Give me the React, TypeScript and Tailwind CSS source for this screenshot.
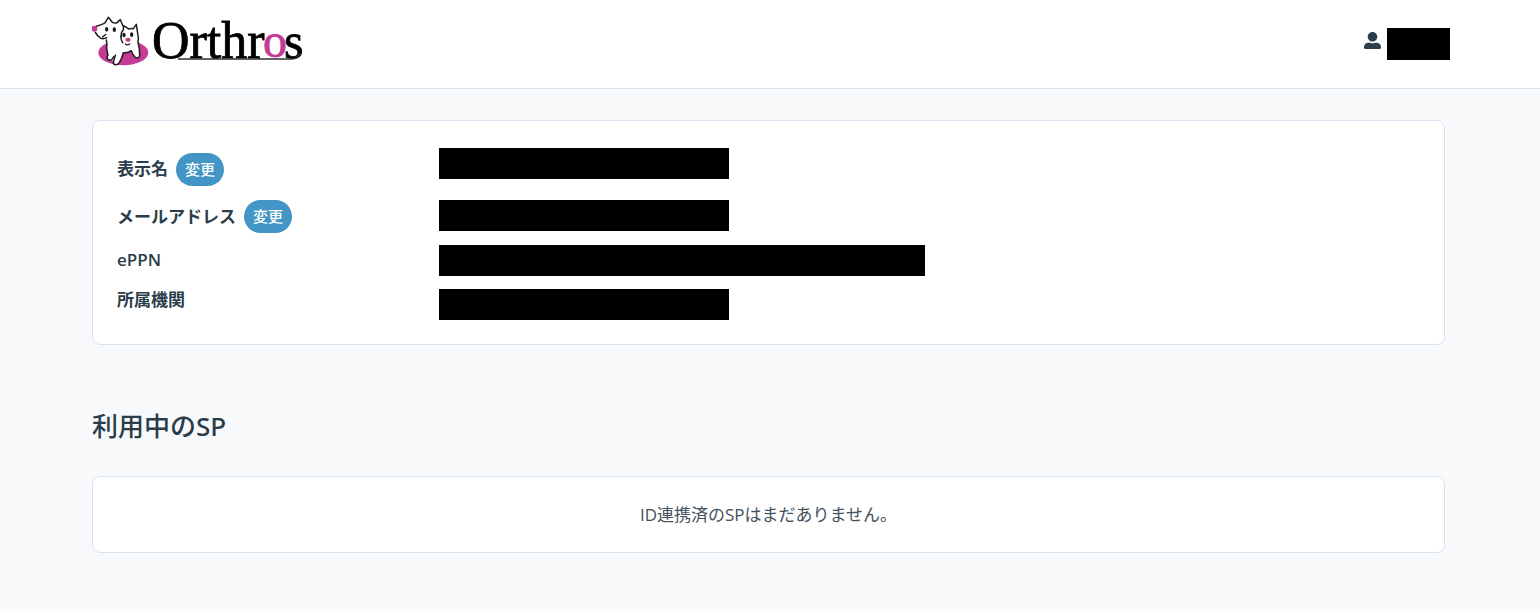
import { FaUserAlt } from "react-icons/fa"

const rows = [
  { label: "表示名", editable: true, height: "h-12", bar: "w-[290px] -mt-3" },
  { label: "メールアドレス", editable: true, height: "h-[47px]", bar: "w-[290px] -mt-0.5" },
  { label: "ePPN", editable: false, height: "h-10", bar: "w-[486px]" },
  { label: "所属機関", editable: false, height: "h-10", bar: "w-[290px] mt-2" },
]

function Logo() {
  return (
    <svg viewBox="0 -4 218 62" className="h-[62px] w-[218px]" role="img" aria-label="Orthros">
      <g transform="scale(0.3333) translate(-21 -12)" strokeLinejoin="round" strokeLinecap="round">
        <ellipse cx="115" cy="128" rx="75" ry="38" fill="#c43b96" />
        {/* both bodies share one white silhouette */}
        <path
          d="M29 56 L34 49 L56 41 L70 22 L82 37 L96 38 L106 30 L114 50 L118 47 L132 57 L145 55 L154 43 L158 70 L160 98 L165 134 Q164 147 152 143 Q143 138 139 122 Q128 130 115 128 L104 156 Q98 167 87 163 Q83 158 86 150 Q76 156 68 148 Q65 142 69 134 L65 110 L64 90 Q42 88 31 68 Z"
          fill="#fff"
        />
        <g fill="none" stroke="#1c1c1c" strokeWidth="4.5">
          <path d="M34 49 Q44 46 56 41 Q62 38 64 32 L70 22 L82 37 Q89 40 96 38 L106 29 L114 48" />
          <path d="M31 67 Q36 78 48 85 Q56 88 65 83 M53 81 Q58 76 62 74" />
          <path d="M64 90 Q67 103 65 114 Q66 126 69 134 Q64 142 68 148 Q75 153 81 148 L86 140" />
          <path d="M108 80 Q108 66 115 59 L116 47 L131 57 Q139 54 145 56 L154 43 L158 70 Q162 84 159 98 Q165 116 164 138 Q160 147 151 142 Q143 136 139 122 Q128 130 115 128 Q111 145 104 156 Q98 167 87 163 Q83 158 87 150 L91 136" />
          <path d="M108 80 Q108 91 113 98" />
        </g>
        <g fill="#1c1c1c">
          <ellipse cx="65" cy="58" rx="5" ry="7" />
          <ellipse cx="88" cy="59" rx="5" ry="7" />
          <ellipse cx="117" cy="75" rx="5" ry="7" />
          <ellipse cx="140" cy="74" rx="5" ry="7" />
        </g>
        <circle cx="28" cy="56" r="9" fill="#c43b96" />
        <ellipse cx="129" cy="89" rx="8" ry="6" fill="#c43b96" />
        <path d="M121 102 Q127 107 134 102" fill="none" stroke="#1c1c1c" strokeWidth="4" />
      </g>
      <g fontFamily="'Liberation Serif', serif" strokeWidth="0.8">
        <text x="60" y="44" fontSize="52" stroke="#000">
          Orthr
        </text>
        <text x="171" y="43" fontSize="48" fill="#c43b96" stroke="#c43b96">
          o
        </text>
        <text x="192" y="44" fontSize="50" stroke="#000">
          s
        </text>
      </g>
      <path d="M86 45 H200 Q206 45 208 39" fill="none" stroke="#333" strokeWidth="1.5" />
    </svg>
  )
}

export default function App() {
  return (
    <div className="min-h-screen bg-[#f8f9fb] font-['Open_Sans','Noto_Sans_CJK_JP',sans-serif] text-[17px] text-[#2b3d4b]">
      <header className="border-b border-[#d8e5ee] bg-white">
        <div className="flex h-[88px] items-center justify-between pr-[90px] pb-1.5 pl-[92px]">
          <a href="#">
            <Logo />
          </a>
          <button type="button" aria-label="ユーザーメニュー" className="flex items-center gap-1.5">
            <FaUserAlt className="mb-0.5 size-[17px]" />
            <span className="mt-1.5 h-8 w-[63px] bg-black" />
          </button>
        </div>
      </header>

      <main className="pt-[31px] pr-[95px] pl-[92px]">
        <dl className="rounded-lg border border-[#d8e3ef] bg-white p-6">
          {rows.map((row) => (
            <div key={row.label} className={`flex items-center ${row.height}`}>
              <dt className="flex w-[322px] shrink-0 items-center gap-2 font-semibold">
                {row.label}
                {row.editable && (
                  <button
                    type="button"
                    className="h-[33px] w-12 rounded-full bg-[#4295c4] text-[15px] font-medium text-white"
                  >
                    変更
                  </button>
                )}
              </dt>
              <dd className={`h-[31px] bg-black ${row.bar}`} />
            </div>
          ))}
        </dl>

        <h2 className="mt-[60px] font-['Noto_Sans','Noto_Sans_CJK_JP',sans-serif] text-[26px] leading-[42px] font-medium">
          利用中のSP
        </h2>
        <p className="mt-[29px] rounded-lg border border-[#d8e3ef] bg-white py-6 text-center leading-[27px] text-[#43525e]">
          ID連携済のSPはまだありません。
        </p>
      </main>
    </div>
  )
}
